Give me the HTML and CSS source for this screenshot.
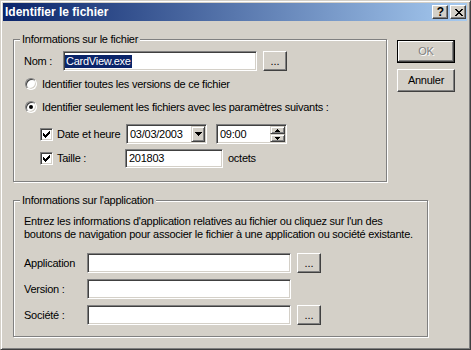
FILE: index.html
```html
<!DOCTYPE html>
<html lang="fr">
<head>
<meta charset="utf-8">
<title>Identifier le fichier</title>
<link rel="stylesheet" href="styles.css">
</head>
<body>
<div class="window">
  <div class="titlebar">
    <span class="title">Identifier le fichier</span>
    <div class="caption-buttons">
      <span class="cbtn help">?</span>
      <span class="cbtn close">
        <svg width="8" height="7" viewBox="0 0 8 7" shape-rendering="crispEdges"><path d="M0 0h2v1H0z M6 0h2v1H6z M1 1h2v1H1z M5 1h2v1H5z M2 2h4v1H2z M3 3h2v1H3z M2 4h4v1H2z M1 5h2v1H1z M5 5h2v1H5z M0 6h2v1H0z M6 6h2v1H6z" fill="#000"/></svg>
      </span>
    </div>
  </div>
  <div class="client">
    <div class="top-row">
      <div class="group g1">
        <span class="legend">Informations sur le fichier</span>
        <div class="row name-row">
          <span class="lbl nom-lbl">Nom :</span>
          <div class="edit nom-edit"><span class="sel">CardView.exe</span></div>
          <span class="btn ellipsis">...</span>
        </div>
        <div class="opt r1"><span class="radio"></span><span>Identifier toutes les versions de ce fichier</span></div>
        <div class="opt r2"><span class="radio checked"><span class="dot"></span></span><span>Identifier seulement les fichiers avec les paramètres suivants :</span></div>
        <div class="opt c1">
          <span class="chk-wrap date-wrap"><span class="check"><svg width="7" height="7" viewBox="0 0 7 7" shape-rendering="crispEdges"><path d="M6 0h1v1H6z M5 1h2v1H5z M0 2h1v1H0z M4 2h3v1H4z M0 3h2v1H0z M3 3h3v1H3z M0 4h5v1H0z M1 5h3v1H1z M2 6h1v1H2z" fill="#000"/></svg></span>Date et heure</span>
          <div class="edit combo"><span class="val">03/03/2003</span><span class="dropbtn"><svg width="7" height="4" viewBox="0 0 7 4" shape-rendering="crispEdges"><path d="M0 0h7v1H0z M1 1h5v1H1z M2 2h3v1H2z M3 3h1v1H3z" fill="#000"/></svg></span></div>
          <div class="edit time"><span class="val">09:00</span><span class="spin"><span class="spinbtn"><svg width="5" height="3" viewBox="0 0 5 3" shape-rendering="crispEdges"><path d="M2 0h1v1H2z M1 1h3v1H1z M0 2h5v1H0z" fill="#000"/></svg></span><span class="spinbtn"><svg width="5" height="3" viewBox="0 0 5 3" shape-rendering="crispEdges"><path d="M0 0h5v1H0z M1 1h3v1H1z M2 2h1v1H2z" fill="#000"/></svg></span></span></div>
        </div>
        <div class="opt c2">
          <span class="chk-wrap size-wrap"><span class="check"><svg width="7" height="7" viewBox="0 0 7 7" shape-rendering="crispEdges"><path d="M6 0h1v1H6z M5 1h2v1H5z M0 2h1v1H0z M4 2h3v1H4z M0 3h2v1H0z M3 3h3v1H3z M0 4h5v1H0z M1 5h3v1H1z M2 6h1v1H2z" fill="#000"/></svg></span>Taille :</span>
          <div class="edit size"><span class="val">201803</span></div>
          <span class="unit">octets</span>
        </div>
      </div>
      <div class="dlg-buttons">
        <span class="btn push default disabled">OK</span>
        <span class="btn push">Annuler</span>
      </div>
    </div>
    <div class="group g2">
      <span class="legend">Informations sur l'application</span>
      <p class="desc">Entrez les informations d'application relatives au fichier ou cliquez sur l'un des<br>boutons de navigation pour associer le fichier à une application ou société existante.</p>
      <div class="row app-row">
        <span class="lbl app-lbl">Application</span>
        <div class="edit app-edit"></div>
        <span class="btn ellipsis">...</span>
      </div>
      <div class="row app-row">
        <span class="lbl app-lbl">Version :</span>
        <div class="edit app-edit"></div>
      </div>
      <div class="row app-row">
        <span class="lbl app-lbl">Société :</span>
        <div class="edit app-edit"></div>
        <span class="btn ellipsis">...</span>
      </div>
    </div>
  </div>
</div>
</body>
</html>
```

FILE: styles.css
```css
html, body {
  margin: 0;
  padding: 0;
  background: #d4d0c8;
}

body {
  font-family: "Liberation Sans", Arial, sans-serif;
  font-size: 11px;
  line-height: 13px;
  color: #000;
  letter-spacing: -0.25px;
}

.window {
  box-sizing: border-box;
  width: 471px;
  height: 350px;
  background: #d4d0c8;
  border: 1px solid;
  border-color: #d4d0c8 #404040 #404040 #d4d0c8;
  box-shadow: inset 1px 1px #fff, inset -1px -1px #808080;
  padding: 2px 3px 3px 2px;
}

.titlebar {
  height: 18px;
  display: flex;
  align-items: center;
  justify-content: space-between;
  padding: 0 1px 0 2px;
  background: linear-gradient(to right, #0a246a, #a6caf0);
}

.title {
  color: #fff;
  font-weight: bold;
  font-size: 12px;
  letter-spacing: 0;
}

.caption-buttons {
  display: flex;
  gap: 2px;
}

.cbtn {
  box-sizing: border-box;
  width: 16px;
  height: 14px;
  background: #d4d0c8;
  border: 1px solid;
  border-color: #fff #404040 #404040 #fff;
  box-shadow: inset -1px -1px #808080;
  display: flex;
  align-items: center;
  justify-content: center;
}

.cbtn.help {
  font-weight: bold;
  font-size: 12px;
  line-height: 12px;
  letter-spacing: 0;
  padding-left: 1px;
}

.cbtn.close svg {
  margin-left: 1px;
  margin-top: 1px;
}

.client {
  padding: 18px 0 0 10px;
}

.top-row {
  display: flex;
  align-items: flex-start;
}

.group {
  position: relative;
  box-sizing: border-box;
  border: 1px solid #808080;
  box-shadow: inset 1px 1px #fff, 1px 1px #fff;
  padding-left: 10px;
}

.legend {
  position: absolute;
  top: -7px;
  left: 6px;
  padding: 0 2px;
  background: #d4d0c8;
  white-space: nowrap;
}

.g1 {
  width: 374px;
  height: 143px;
  padding-top: 11px;
}

.g2 {
  width: 415px;
  height: 137px;
  margin-top: 18px;
  padding-top: 14px;
}

.row {
  display: flex;
  align-items: center;
  height: 20px;
}

.lbl {
  white-space: nowrap;
}

.nom-lbl {
  width: 39px;
}

.edit {
  box-sizing: border-box;
  height: 20px;
  background: #fff;
  border: 1px solid;
  border-color: #808080 #fff #fff #808080;
  box-shadow: inset 1px 1px #404040, inset -1px -1px #d4d0c8;
  padding: 0 1px 0 3px;
  display: flex;
  align-items: center;
  white-space: nowrap;
}

.nom-edit {
  width: 194px;
  padding-left: 1px;
}

.sel {
  background: #0a246a;
  color: #fff;
  padding: 0 1px;
  line-height: 13px;
}

.btn {
  box-sizing: border-box;
  background: #d4d0c8;
  border: 1px solid;
  border-color: #fff #404040 #404040 #fff;
  box-shadow: inset -1px -1px #808080;
  display: flex;
  align-items: center;
  justify-content: center;
  white-space: nowrap;
}

.ellipsis {
  width: 24px;
  height: 20px;
  margin-left: 6px;
  letter-spacing: 0;
}

.opt {
  display: flex;
  align-items: center;
  white-space: nowrap;
}

.r1 {
  height: 14px;
  margin-top: 6px;
  margin-left: 1px;
}

.r2 {
  height: 14px;
  margin-top: 9px;
  margin-left: 1px;
}

.c1 {
  height: 20px;
  margin-top: 10px;
  margin-left: 16px;
}

.c2 {
  height: 19px;
  margin-top: 5px;
  margin-left: 16px;
}

.radio {
  box-sizing: border-box;
  width: 12px;
  height: 12px;
  border-radius: 50%;
  background: #fff;
  border: 1px solid;
  border-color: #808080 #fff #fff #808080;
  box-shadow: inset 1px 1px #404040, inset -1px -1px #d4d0c8;
  margin-right: 5px;
  display: flex;
  align-items: center;
  justify-content: center;
  flex: none;
}

.dot {
  width: 4px;
  height: 4px;
  border-radius: 50%;
  background: #000;
}

.chk-wrap {
  display: flex;
  align-items: center;
  flex: none;
}

.date-wrap {
  width: 86px;
}

.size-wrap {
  width: 85px;
}

.check {
  box-sizing: border-box;
  width: 13px;
  height: 13px;
  background: #fff;
  border: 1px solid;
  border-color: #808080 #fff #fff #808080;
  box-shadow: inset 1px 1px #404040, inset -1px -1px #d4d0c8;
  margin-right: 4px;
  display: flex;
  align-items: center;
  justify-content: center;
  flex: none;
}

.combo {
  width: 81px;
  padding-right: 1px;
}

.time {
  width: 71px;
  margin-left: 9px;
  padding-right: 1px;
}

.val {
  flex: 1;
}

.dropbtn {
  box-sizing: border-box;
  width: 14px;
  height: 16px;
  background: #d4d0c8;
  border: 1px solid;
  border-color: #d4d0c8 #404040 #404040 #d4d0c8;
  box-shadow: inset 1px 1px #fff, inset -1px -1px #808080;
  display: flex;
  align-items: center;
  justify-content: center;
}

.spin {
  display: flex;
  flex-direction: column;
  width: 15px;
  height: 16px;
}

.spinbtn {
  box-sizing: border-box;
  height: 8px;
  background: #d4d0c8;
  border: 1px solid;
  border-color: #d4d0c8 #404040 #404040 #d4d0c8;
  box-shadow: inset 1px 1px #fff, inset -1px -1px #808080;
  display: flex;
  align-items: center;
  justify-content: center;
}

.size {
  width: 98px;
  height: 19px;
}

.unit {
  margin-left: 5px;
}

.dlg-buttons {
  display: flex;
  flex-direction: column;
  gap: 6px;
  margin-left: 10px;
  margin-top: 1px;
}

.push {
  width: 58px;
  height: 23px;
}

.push.default {
  border: 1px solid #000;
  box-shadow: inset -1px -1px #404040, inset 1px 1px #fff, inset -2px -2px #808080;
}

.push.disabled {
  color: #808080;
  text-shadow: 1px 1px #fff;
}

.desc {
  margin: 0;
  white-space: nowrap;
}

.app-row {
  margin-top: 6px;
}

.desc + .app-row {
  margin-top: 12px;
}

.app-lbl {
  width: 63px;
}

.app-edit {
  width: 204px;
}
```
